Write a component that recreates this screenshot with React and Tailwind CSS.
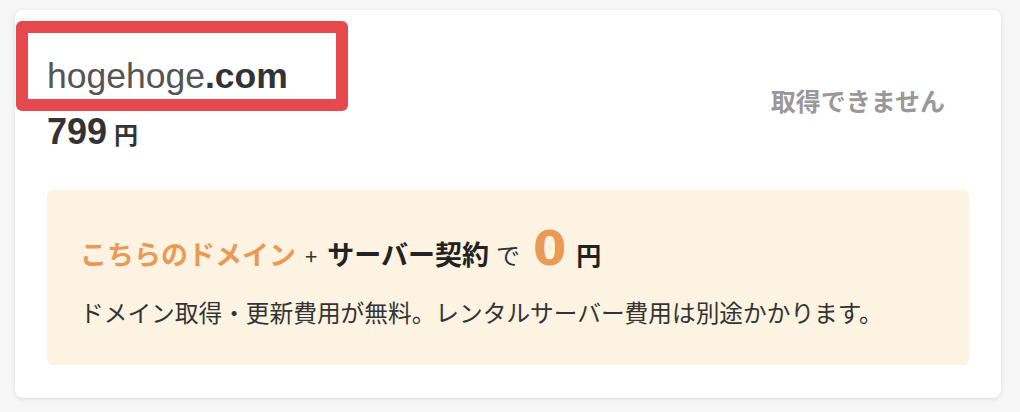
import React from "react";

const jp = { fontFamily: '"Noto Sans CJK JP", "Noto Sans", sans-serif' };
const latin = { fontFamily: '"Liberation Sans", Arial, sans-serif' };
const digit = { fontFamily: '"DejaVu Sans", sans-serif' };

export default function App() {
  return (
    <div className="w-[1020px] h-[412px] bg-[#f6f6f6] pt-[10px] pl-[15px]" style={jp}>
      <div className="relative w-[986px] h-[388px] bg-white rounded-lg shadow-[0_1px_4px_rgba(0,0,0,0.12)] px-8 pt-[46px]">
        <div className="flex items-start">
          <div className="flex-1">
            <div className="text-[35.5px] leading-[40px] text-[#555]" style={latin}>
              hogehoge<span className="font-bold text-[#333]">.com</span>
            </div>
            <div className="mt-[18px] h-[36px] flex items-baseline text-[#333]">
              <span className="text-[36px] leading-[36px] font-bold" style={latin}>
                799
              </span>
              <span className="ml-[7px] text-[24px] font-bold">円</span>
            </div>
          </div>
          <div className="mt-[28px] mr-[24px] text-[25px] font-bold text-[#999] leading-[32px]">
            取得できません
          </div>
        </div>

        <div className="mt-[40px] h-[175px] bg-[#fcf3e2] rounded-md px-[33px] pt-[34px]">
          <div className="flex items-baseline leading-none">
            <span className="text-[27px] font-bold text-[#eb9a55]">こちらのドメイン</span>
            <span className="ml-[9px] mr-[10px] text-[22px] text-[#333]">+</span>
            <span className="text-[27px] font-bold text-[#222]">サーバー契約</span>
            <span className="ml-[7px] text-[24px] text-[#333]">で</span>
            <span className="ml-[13px] mr-[10px] text-[48px] font-bold text-[#eb9a55]" style={digit}>
              0
            </span>
            <span className="text-[25px] font-bold text-[#222]">円</span>
          </div>
          <p className="mt-[24px] text-[23.7px] text-[#333] leading-[32px] whitespace-nowrap">
            ドメイン取得・更新費用が無料。レンタルサーバー費用は別途かかります。
          </p>
        </div>

        <div className="absolute left-[1px] top-[11px] w-[332px] h-[90px] border-[12px] border-[#e5484d] rounded-[6px]" />
      </div>
    </div>
  );
}
